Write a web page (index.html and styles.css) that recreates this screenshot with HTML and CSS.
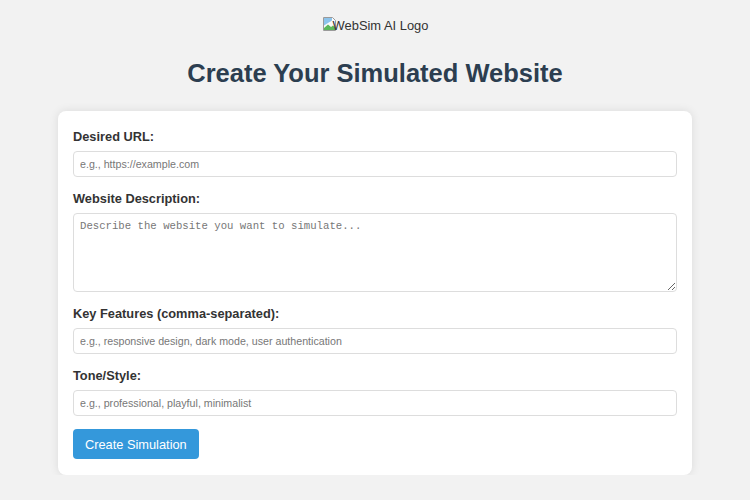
FILE: index.html
```html
<!DOCTYPE html>
<html lang="en">
<head>
  <meta charset="UTF-8" />
  <meta name="viewport" content="width=device-width, initial-scale=1.0"/>
  <title>WebSim AI - Create Simulation</title>
  <link rel="stylesheet" href="styles.css">
</head>
<body>
  <div class="logo">
    <svg class="broken" width="16" height="16" viewBox="0 0 16 16">
      <path d="M1.5 1.5h9l3 3v10h-12z" fill="#fafafa" stroke="#9a9a9a"/>
      <path d="M2 2h8v2.5L2 9.5z" fill="#8cc4ec"/>
      <path d="M2 12l4-3.5 3 2.5 2-1.5 2 2V14H2z" fill="#5cb85c"/>
    </svg>
    <span>WebSim AI Logo</span>
  </div>
  <h1>Create Your Simulated Website</h1>

  <div class="card">
    <form>
      <div class="field">
        <label for="url">Desired URL:</label>
        <input type="text" id="url" placeholder="e.g., https://example.com">
      </div>
      <div class="field">
        <label for="desc">Website Description:</label>
        <textarea id="desc" placeholder="Describe the website you want to simulate..."></textarea>
      </div>
      <div class="field">
        <label for="features">Key Features (comma-separated):</label>
        <input type="text" id="features" placeholder="e.g., responsive design, dark mode, user authentication">
      </div>
      <div class="field">
        <label for="tone">Tone/Style:</label>
        <input type="text" id="tone" placeholder="e.g., professional, playful, minimalist">
      </div>
      <button type="button">Create Simulation</button>
    </form>
  </div>
</body>
</html>
```

FILE: styles.css
```css
body {
  margin: 0;
  padding: 16px 0 0;
  background: #f2f2f2;
  font-family: 'Liberation Sans', Arial, sans-serif;
  color: #333;
}

.logo {
  display: flex;
  justify-content: center;
  align-items: center;
  font-size: 12.9px;
  color: #333;
  height: 18px;
}

.logo .broken {
  margin-right: -5px;
  margin-top: -3px;
}

h1 {
  text-align: center;
  font-size: 25.5px;
  color: #2c3e50;
  margin: 24px 0 23px;
  line-height: 30px;
}

.card {
  width: 604px;
  margin: 0 auto;
  background: #fff;
  padding: 18px 15px 16px;
  border-radius: 8px;
  box-shadow: 0 0 10px rgba(0, 0, 0, 0.1);
}

.field {
  margin-bottom: 14px;
}

label {
  display: block;
  font-weight: bold;
  font-size: 12.8px;
  line-height: 16px;
  margin-bottom: 6px;
  color: #333;
}

input,
textarea {
  display: block;
  width: 100%;
  box-sizing: border-box;
  padding: 6px;
  border: 1px solid #ddd;
  border-radius: 4px;
  font-size: 10.67px;
  line-height: 12px;
}

input {
  height: 26px;
  font-family: 'Liberation Sans', Arial, sans-serif;
}

textarea {
  height: 79px;
  font-family: 'Liberation Mono', monospace;
}

input::placeholder,
textarea::placeholder {
  color: #777;
}

button {
  margin-top: -1px;
  background: #3498db;
  color: #fff;
  border: none;
  border-radius: 4px;
  padding: 0 12px;
  height: 30px;
  font-size: 12.8px;
  font-family: 'Liberation Sans', Arial, sans-serif;
  cursor: pointer;
}
```
